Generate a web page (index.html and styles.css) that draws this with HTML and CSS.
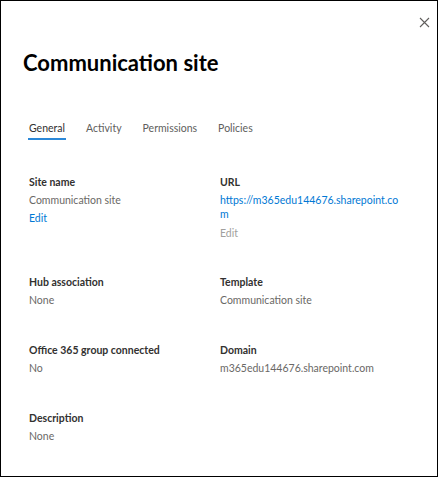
FILE: index.html
```html
<!DOCTYPE html>
<html lang="en">
<head>
<meta charset="utf-8">
<title>Communication site</title>
<link rel="stylesheet" href="styles.css">
</head>
<body>
<div class="panel">
  <button class="close" aria-label="Close">
    <svg width="11" height="11" viewBox="0 0 11 11"><path d="M1 1 L10 10 M10 1 L1 10" stroke="#605e5c" stroke-width="1.1" fill="none"/></svg>
  </button>
  <h1 class="title">Communication site</h1>
  <nav class="tabs">
    <span class="tab active">General</span>
    <span class="tab">Activity</span>
    <span class="tab">Permissions</span>
    <span class="tab">Policies</span>
  </nav>
  <div class="fields">
    <div class="field">
      <div class="label">Site name</div>
      <div class="value">Communication site</div>
      <a class="link">Edit</a>
    </div>
    <div class="field">
      <div class="label">URL</div>
      <a class="link url">https://m365edu144676.sharepoint.com</a>
      <span class="disabled">Edit</span>
    </div>
    <div class="field">
      <div class="label">Hub association</div>
      <div class="value">None</div>
    </div>
    <div class="field">
      <div class="label">Template</div>
      <div class="value">Communication site</div>
    </div>
    <div class="field">
      <div class="label">Office 365 group connected</div>
      <div class="value">No</div>
    </div>
    <div class="field">
      <div class="label">Domain</div>
      <div class="value">m365edu144676.sharepoint.com</div>
    </div>
    <div class="field">
      <div class="label">Description</div>
      <div class="value">None</div>
    </div>
  </div>
</div>
</body>
</html>
```

FILE: styles.css
```css
html, body {
  margin: 0;
  padding: 0;
  background: #ffffff;
}

body {
  font-family: Lato, "Open Sans", sans-serif;
  font-size: 10.5px;
  line-height: 18px;
  color: #323130;
}

.panel {
  position: relative;
  box-sizing: border-box;
  width: 438px;
  height: 477px;
  border: 1px solid #000000;
  padding: 47px 0 0 0;
  background: #ffffff;
}

.close {
  position: absolute;
  top: 16px;
  left: 418px;
  width: 11px;
  height: 11px;
  padding: 0;
  margin: 0;
  border: 0;
  background: transparent;
  display: flex;
}

.title {
  margin: 0 0 0 22px;
  font-size: 22px;
  line-height: 30px;
  font-weight: 700;
  color: #000000;
}

.tabs {
  display: flex;
  gap: 19px;
  margin: 40.5px 0 0 27px;
}

.tab {
  padding: 0 1px 1px 1px;
  border-bottom: 2px solid transparent;
  color: #605e5c;
}

.tab.active {
  color: #323130;
  border-bottom-color: #2b88d8;
}

.fields {
  display: grid;
  grid-template-columns: 191px 183px;
  row-gap: 31.7px;
  margin: 33.5px 0 0 28px;
}

.field {
  display: flex;
  flex-direction: column;
  align-items: flex-start;
}

.label {
  font-weight: 700;
  color: #323130;
}

.value {
  color: #6a6866;
}

.link {
  color: #0078d4;
  text-decoration: none;
}

.url {
  line-height: 14px;
  padding-top: 1.5px;
  word-break: break-all;
}

.disabled {
  margin-top: 3px;
  color: #a19f9d;
}
```
